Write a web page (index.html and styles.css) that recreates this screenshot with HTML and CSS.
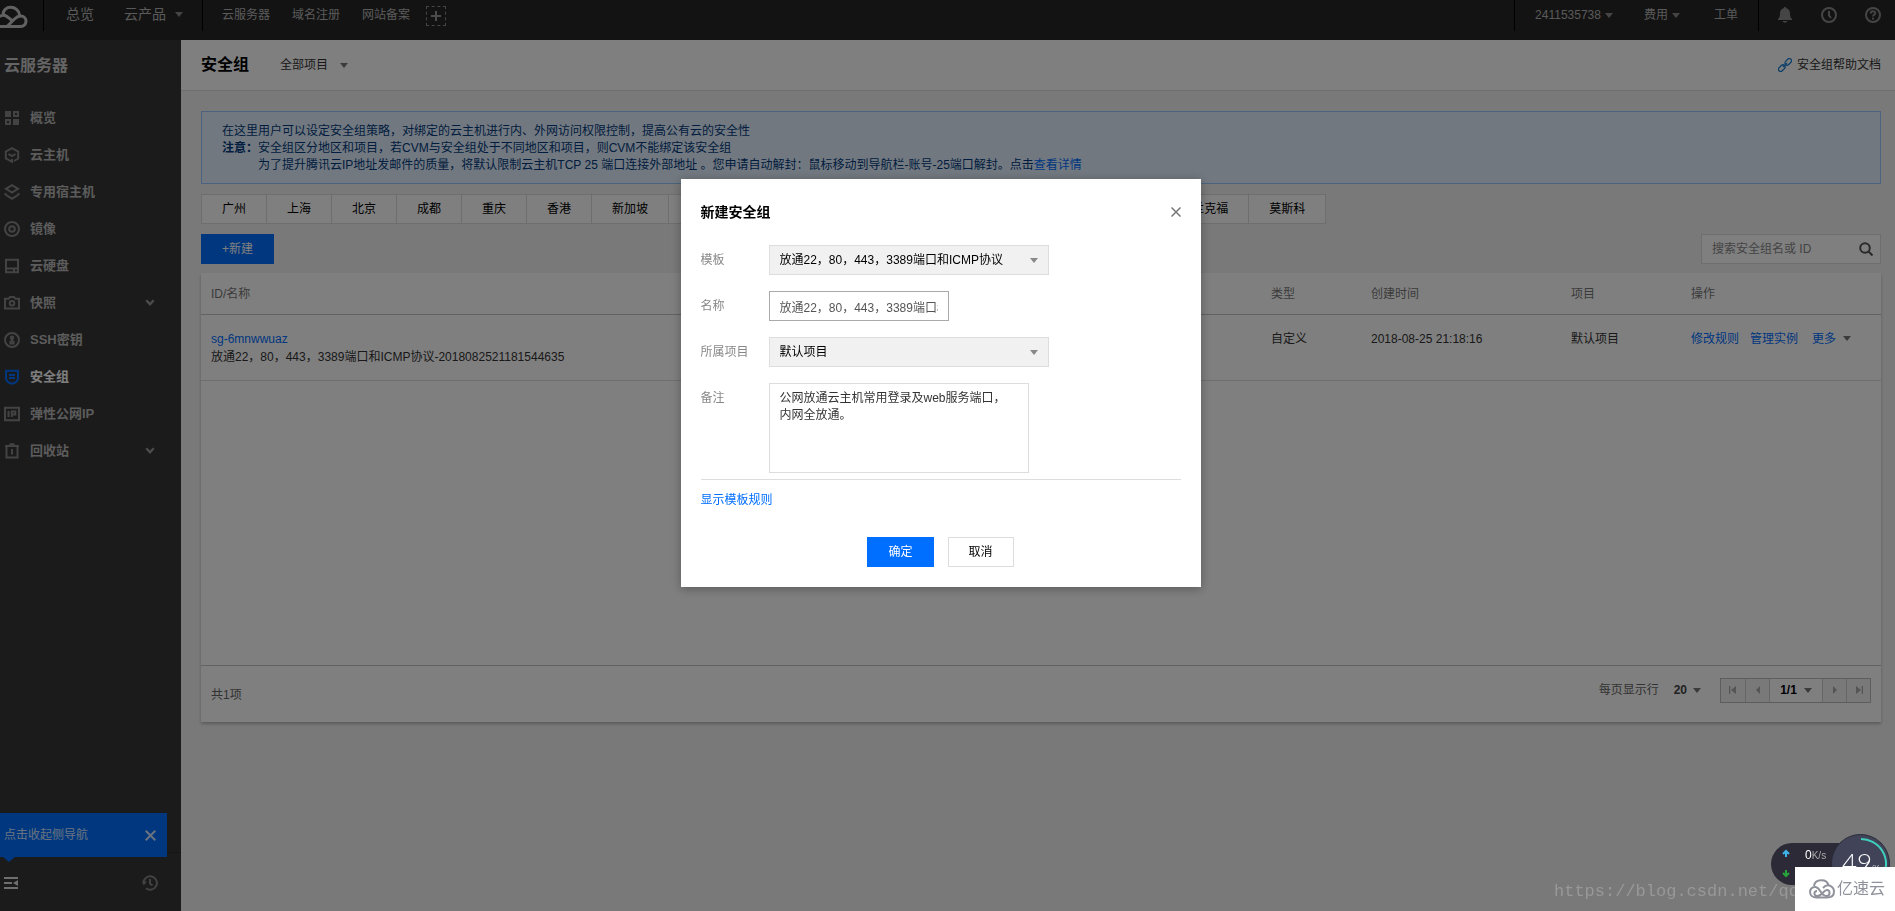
FILE: index.html
```html
<!DOCTYPE html>
<html lang="zh-CN">
<head>
<meta charset="utf-8">
<title>安全组</title>
<link rel="stylesheet" href="styles.css">
</head>
<body>
<div class="page">
  <header class="topbar">
    <a class="logo" href="#" aria-label="控制台首页">
      <svg width="28" height="26" viewBox="0 0 28 26" fill="none" stroke="currentColor" stroke-width="3"><path d="M-1 13.5c5-2.500 7.500-1 10.500 2l3 2.500M3 12C3 1.500 18.500 2 19.500 12M7 23.500h13.500c7 0 7.500-10 .5-10.500-3-.2-4.500 1-6.500 3L7 23.500H-1"/></svg>
    </a>
    <nav class="nav-main">
      <a href="#">总览</a>
      <a class="with-caret" href="#">云产品<i class="caret"></i></a>
    </nav>
    <nav class="nav-fav">
      <a href="#">云服务器</a>
      <a href="#">域名注册</a>
      <a href="#">网站备案</a>
      <button class="add-fav" type="button" aria-label="添加"></button>
    </nav>
    <nav class="nav-user">
      <a class="user-id" href="#">2411535738<i class="caret"></i></a>
      <a class="user-fee" href="#">费用<i class="caret"></i></a>
      <a href="#">工单</a>
    </nav>
    <div class="nav-icons">
      <button type="button" aria-label="消息"><svg width="16" height="16" viewBox="0 0 16 16" fill="currentColor"><path d="M8 0c.9 0 1.300.6 1.300 1.300C12 2 13 4 13 6.500c0 3 .8 4.500 2 5.500v1H1v-1c1.200-1 2-2.500 2-5.500C3 4 4 2 6.700 1.300 6.700.6 7.100 0 8 0zM5.500 14h5c-.6 1.300-1.500 1.700-2.500 1.700s-1.900-.4-2.500-1.700z"/></svg></button>
      <button type="button" aria-label="历史"><svg width="16" height="16" viewBox="0 0 16 16" fill="none" stroke="currentColor" stroke-width="2"><circle cx="8" cy="8" r="7"/><path d="M8 4v4.500l2 2.500"/></svg></button>
      <button type="button" aria-label="帮助"><svg width="16" height="16" viewBox="0 0 16 16" fill="none" stroke="currentColor" stroke-width="2"><circle cx="8" cy="8" r="7"/><path d="M5.800 6.500C5.800 3.600 10.300 3.700 10.200 6.300 10.100 7.800 8 7.800 8 9.600M8 10.800v1.800"/></svg></button>
    </div>
  </header>

  <div class="body">
    <aside class="sidebar">
      <h2 class="side-title">云服务器</h2>
      <nav class="side-nav">
        <a href="#"><svg class="ico" viewBox="0 0 16 16"><path d="M1 1h6v6H1zM9 9h6v6H9z" class="solid"/><path d="M10 2h4v4h-4zM2 10h4v4H2z"/></svg>概览</a>
        <a href="#"><svg class="ico" viewBox="0 0 16 16"><path d="M10 14l4.200-2.500v-7L8 1.200 1.800 4.500v7L8 14.800V12M4.500 7L8 9l3.500-2"/></svg>云主机</a>
        <a href="#"><svg class="ico" viewBox="0 0 16 16"><path d="M8 1.200l6 3.600-6 3.800-6-3.800zM1.500 9v1.500L8 14.800l6.500-4.300V9"/></svg>专用宿主机</a>
        <a href="#"><svg class="ico" viewBox="0 0 16 16"><circle cx="8" cy="8" r="7"/><circle cx="8" cy="8" r="2.800"/></svg>镜像</a>
        <a href="#"><svg class="ico" viewBox="0 0 16 16"><path d="M2 1.800h12v12.500H2zM2 10.500h12M9 12.500h2"/></svg>云硬盘</a>
        <a href="#"><svg class="ico" viewBox="0 0 16 16"><path d="M1 3.800h3.500L6 2h4l1.500 1.800H15v9.700H1z"/><circle cx="8" cy="8.200" r="2.300"/></svg>快照<svg class="chev" viewBox="0 0 8 6"><path d="M.8 1L4 4.500 7.200 1"/></svg></a>
        <a href="#"><svg class="ico" viewBox="0 0 16 16"><circle cx="8" cy="8" r="7"/><circle cx="8" cy="5.800" r="1.200"/><path d="M8 7v3M5.500 11.500h5M6.500 8.800v2.500M9.500 8.800v2.500"/></svg>SSH密钥</a>
        <a class="active" href="#"><svg class="ico" viewBox="0 0 16 16"><path d="M2 1.800h12V9c0 3-2.500 5-6 5.800C4.500 14 2 12 2 9zM5 6h6M5 9h6"/></svg>安全组</a>
        <a href="#"><svg class="ico" viewBox="0 0 16 16"><path d="M1 1.800h14v12.500H1zM4.500 5v6M7.800 11V5.500h3.500v3H7.800"/></svg>弹性公网IP</a>
        <a href="#"><svg class="ico" viewBox="0 0 16 16"><path d="M1 3h14M5.500 1.200h5M2.500 3v11.500h11V3M8 6v5.500"/></svg>回收站<svg class="chev" viewBox="0 0 8 6"><path d="M.8 1L4 4.500 7.200 1"/></svg></a>
      </nav>
      <div class="side-foot">
        <div class="tip">点击收起侧导航
          <button type="button" aria-label="关闭提示"><svg width="11" height="11" viewBox="0 0 11 11" stroke="currentColor" stroke-width="2"><path d="M.7.7l9.600 9.600M10.300.7L.7 10.300"/></svg></button>
        </div>
        <button class="collapse" type="button" aria-label="收起"><svg width="14" height="14" viewBox="0 0 14 14" fill="currentColor"><path d="M0 1h14v2H0zM0 6h8v2H0zM0 11h14v2H0zM14 4v6L9 7z"/></svg></button>
        <button class="recent" type="button" aria-label="最近访问"><svg width="16" height="16" viewBox="0 0 16 16" fill="none" stroke="currentColor" stroke-width="2"><path d="M1.500 8A6.700 6.700 0 1 1 4 13.200M8 4v4.500l2.500 2"/><path d="M0 6.500h5l-3.300 4z" fill="currentColor" stroke="none"/></svg></button>
      </div>
    </aside>

    <main class="main">
      <div class="main-head">
        <h1>安全组</h1>
        <button class="project" type="button">全部项目<i class="caret"></i></button>
        <a class="help" href="#"><svg width="14" height="14" viewBox="0 0 14 14" fill="none" stroke="currentColor" stroke-width="1.300"><rect x="6.500" y="1.700" width="7.500" height="4.400" rx="2.200" transform="rotate(-45 10.200 3.900)"/><rect x="0" y="7.900" width="7.500" height="4.400" rx="2.200" transform="rotate(-45 3.800 10.100)"/><path d="M5 9l4-4"/></svg>安全组帮助文档</a>
      </div>
      <div class="content">
        <div class="notice">
          <p>在这里用户可以设定安全组策略，对绑定的云主机进行内、外网访问权限控制，提高公有云的安全性</p>
          <div class="notice-note">
            <b>注意：</b>
            <div>
              <p>安全组区分地区和项目，若CVM与安全组处于不同地区和项目，则CVM不能绑定该安全组</p>
              <p>为了提升腾讯云IP地址发邮件的质量，将默认限制云主机TCP 25 端口连接外部地址 。您申请自动解封：鼠标移动到导航栏-账号-25端口解封。点击<a href="#">查看详情</a></p>
            </div>
          </div>
        </div>
        <div class="regions">
          <button type="button">广州</button><button type="button">上海</button><button type="button">北京</button><button type="button">成都</button><button type="button">重庆</button><button type="button">香港</button><button type="button">新加坡</button><button type="button">曼谷</button><button type="button">孟买</button><button type="button">首尔</button><button type="button">东京</button><button type="button">硅谷</button><button type="button">弗吉尼亚</button><button type="button">多伦多</button><button type="button">法兰克福</button><button type="button">莫斯科</button>
        </div>
        <div class="actions">
          <button class="btn primary" type="button">+新建</button>
          <label class="search">
            <input type="text" placeholder="搜索安全组名或 ID" aria-label="搜索安全组">
            <svg width="14" height="14" viewBox="0 0 14 14" fill="none" stroke="currentColor" stroke-width="2"><circle cx="6" cy="6" r="4.800"/><path d="M9.500 9.500l4 4"/></svg>
          </label>
        </div>
        <section class="panel">
          <div class="table-wrap">
            <table>
              <colgroup><col><col class="c-type"><col class="c-time"><col class="c-proj"><col class="c-op"></colgroup>
              <thead><tr><th>ID/名称</th><th>类型</th><th>创建时间</th><th>项目</th><th>操作</th></tr></thead>
              <tbody><tr>
                <td><a href="#">sg-6mnwwuaz</a><br>放通22，80，443，3389端口和ICMP协议-2018082521181544635</td>
                <td>自定义</td><td>2018-08-25 21:18:16</td><td>默认项目</td>
                <td><div class="ops"><a href="#">修改规则</a><a href="#">管理实例</a><a class="more" href="#">更多<i class="caret"></i></a></div></td>
              </tr></tbody>
            </table>
          </div>
          <footer class="panel-foot">
            <span class="total">共1项</span>
            <span class="per">每页显示行</span>
            <button class="size" type="button">20<i class="caret"></i></button>
            <div class="pager">
              <button type="button" aria-label="首页"><svg width="8" height="10" viewBox="0 0 8 10" fill="currentColor"><path d="M0 1h1.300v8H0zM7 1v8L2 5z"/></svg></button>
              <button type="button" aria-label="上一页"><svg width="8" height="10" viewBox="0 0 8 10" fill="currentColor"><path d="M6 1v8L2 5z"/></svg></button>
              <button class="cur" type="button">1/1<i class="caret"></i></button>
              <button type="button" aria-label="下一页"><svg width="8" height="10" viewBox="0 0 8 10" fill="currentColor"><path d="M2 1v8l4-4z"/></svg></button>
              <button type="button" aria-label="末页"><svg width="8" height="10" viewBox="0 0 8 10" fill="currentColor"><path d="M6.700 1H8v8H6.700zM1 1v8l5-4z"/></svg></button>
            </div>
          </footer>
        </section>
      </div>
    </main>
  </div>
</div>

<div class="scrim">
  <form class="dialog" role="dialog" aria-labelledby="dlg-title">
    <div class="dlg-head">
      <h3 id="dlg-title">新建安全组</h3>
      <button class="close" type="button" aria-label="关闭"><svg width="10" height="10" viewBox="0 0 10 10" stroke="currentColor" stroke-width="1.500"><path d="M.5.5l9 9M9.500.5l-9 9"/></svg></button>
    </div>
    <div class="fields">
      <label for="tpl">模板</label>
      <div class="pick"><select id="tpl"><option>放通22，80，443，3389端口和ICMP协议</option></select></div>
      <label for="name">名称</label>
      <input id="name" type="text" value="放通22，80，443，3389端口和ICMP协议">
      <label for="proj">所属项目</label>
      <div class="pick"><select id="proj"><option>默认项目</option></select></div>
      <label for="memo">备注</label>
      <textarea id="memo">公网放通云主机常用登录及web服务端口，内网全放通。</textarea>
    </div>
    <div class="rules"><a href="#">显示模板规则</a></div>
    <div class="dlg-foot">
      <button class="btn primary" type="submit">确定</button>
      <button class="btn" type="button">取消</button>
    </div>
  </form>
</div>

<div class="corner">
  <span class="watermark">https://blog.csdn.net/qq</span>
  <div class="speed">
    <svg class="arrows" width="8" height="30" viewBox="0 0 8 30" fill="none" stroke-width="2"><path d="M4 8V2M1 5l3-3 3 3" stroke="#3fb4ea"/><path d="M4 21v6M1 24l3 3 3-3" stroke="#27a53a"/></svg>
    <span class="rate"><b>0</b>K/s</span>
    <div class="gauge">
      <svg width="58" height="58" viewBox="0 0 58 58" fill="none"><path d="M29 4a25 25 0 0 1 22 37" stroke="#3fd0bd" stroke-width="2"/></svg>
      <span>49<small>%</small></span>
    </div>
  </div>
  <div class="brand">
    <svg width="26" height="20" viewBox="0 0 26 20" fill="none" stroke="currentColor" stroke-width="2"><path d="M5 7C6-.5 18-.5 19.500 6.500M8 18.500C-1 19-1 7.500 6.500 8c5 .5 5 9 11 9 4 0 4-6 .5-6-3.500 0-5 6-9.500 6-4 0-4-5-.5-5"/><path d="M14 9c5-6 11-1 11 3.500 0 4-3 6-7 6H8"/></svg>
    <span>亿速云</span>
  </div>
</div>
</body>
</html>
```
FILE: styles.css
```css
* { box-sizing: border-box; }
body, h1, h2, h3, p { margin: 0; }
body {
  font: 12px/17px "Liberation Sans", "Noto Sans CJK SC", sans-serif;
  color: #333;
  background: #f3f3f3;
  overflow: hidden;
}
button, input, select, textarea { font: inherit; color: inherit; margin: 0; }
button { background: none; border: 0; padding: 0; cursor: pointer; }
a { color: #006eff; text-decoration: none; }
svg { display: block; flex: none; }

.page { display: flex; flex-direction: column; min-height: 100vh; }
.caret {
  display: inline-block;
  border: 4px solid transparent;
  border-top: 5px solid currentColor;
  border-bottom: 0;
}

/* top bar */
.topbar {
  display: flex;
  align-items: flex-start;
  height: 40px;
  background: #272727;
  color: #b4b4b4;
}
.topbar a { color: inherit; }
.topbar > * { height: 31px; display: flex; align-items: center; padding-bottom: 2px; }
.topbar .caret { color: #888; }
.topbar .logo { padding: 0 15px 0 0; color: #c4c4c4; }
.nav-main, .nav-fav, .nav-user, .nav-icons { border-left: 1px solid #000; }
.nav-main { gap: 30px; padding: 0 19px 2px 22px; font-size: 14px; }
.nav-main .with-caret, .nav-user a { display: flex; align-items: center; }
.nav-main .with-caret { gap: 9px; }
.nav-fav { gap: 22px; padding: 0 19px; flex: 1; }
.nav-user { padding: 0 20px; }
.nav-user a { gap: 4px; }
.nav-user .user-id { margin-right: 31px; }
.nav-user .user-fee { margin-right: 34px; }
.nav-icons { padding-left: 4px; }
.nav-icons button { width: 44px; height: 28px; display: grid; place-items: center; color: #8a8a8a; }
.add-fav {
  width: 20px; height: 20px;
  margin-left: -6px;
  border: 1px dashed #8a8a8a;
  background:
    linear-gradient(#999, #999) center / 10px 2px no-repeat,
    linear-gradient(#999, #999) center / 2px 10px no-repeat;
}

.body { display: flex; flex: 1; }

/* side bar */
.sidebar {
  width: 181px;
  flex: none;
  display: flex;
  flex-direction: column;
  background: #363636;
  color: #b8b8b8;
}
.side-title { padding: 14px 4px 12px; font-size: 16px; line-height: 24px; color: #c8c8c8; }
.side-nav { padding-top: 9px; flex: 1; }
.side-nav a {
  display: flex;
  align-items: center;
  gap: 10px;
  height: 37px;
  padding: 0 26px 0 4px;
  font-size: 13px;
  font-weight: bold;
  color: inherit;
}
.ico { width: 16px; height: 16px; fill: none; stroke: #868686; stroke-width: 2; }
.ico .solid { fill: #868686; stroke: none; }
.chev { width: 10px; height: 7px; margin-left: auto; fill: none; stroke: #999; stroke-width: 2; }
.side-nav .active { color: #fff; }
.active .ico { stroke: #006eff; }
.side-foot {
  position: relative;
  display: flex;
  justify-content: space-between;
  align-items: center;
  height: 59px;
  padding: 2px 23px 0 4px;
  border-top: 1px solid #2c2c2c;
}
.collapse { color: #ddd; }
.recent { color: #858585; }
.tip {
  position: absolute;
  left: 0; right: 14px; bottom: 54px;
  height: 44px;
  display: flex;
  align-items: center;
  justify-content: space-between;
  padding: 0 11px 0 4px;
  background: #006eff;
  color: #d5e5ff;
}
.tip::after {
  content: "";
  position: absolute;
  left: 3px; top: 100%;
  border: 6px solid transparent;
  border-top: 5px solid #006eff;
  border-bottom: 0;
}

/* main */
.main { flex: 1; min-width: 0; }
.main-head {
  display: flex;
  align-items: center;
  height: 51px;
  padding: 0 14px 0 20px;
  background: #fff;
  border-bottom: 1px solid #ddd;
}
.main-head h1 { font-size: 16px; line-height: 24px; color: #000; }
.project { display: flex; align-items: center; gap: 12px; margin-left: 31px; }
.project .caret, .size .caret, .cur .caret, .more .caret { color: #777; }
.help { display: flex; align-items: center; gap: 5px; margin-left: auto; color: #333; }
.help svg { color: #1a7fd0; }
.content { padding: 20px 14px 20px 20px; }

.notice {
  padding: 11px 20px 9px;
  border: 1px solid #97c7ff;
  background: #e5f0ff;
  color: #003b80;
}
.notice-note { display: flex; }
.notice-note b { width: 36px; flex: none; }

.regions { display: flex; margin-top: 10px; }
.regions button {
  height: 30px;
  padding: 0 20px;
  border: 1px solid #ddd;
  border-right-width: 0;
  background: #fff;
  color: #000;
}
.regions button:last-child { border-right-width: 1px; }

.actions { display: flex; justify-content: space-between; margin: 10px 0 9px; }
.btn {
  min-width: 66px;
  height: 30px;
  padding: 0 20px;
  border: 1px solid #ddd;
  background: #fff;
  color: #000;
}
.btn.primary { border-color: #006eff; background: #006eff; color: #fff; }
.search {
  display: flex;
  align-items: center;
  width: 180px;
  height: 30px;
  padding: 0 7px 0 10px;
  border: 1px solid #ddd;
  background: #fff;
  color: #555;
}
.search input { flex: 1; min-width: 0; border: 0; padding: 0; background: none; outline: 0; }
.search input::placeholder { color: #888; opacity: 1; }

.panel { background: #fff; box-shadow: 0 2px 3px rgba(0, 0, 0, .25); }
.table-wrap { min-height: 392px; }
table { width: 100%; border-collapse: collapse; table-layout: fixed; }
.c-type { width: 100px; }
.c-time, .c-op { width: 200px; }
.c-proj { width: 120px; }
th, td { padding: 0 10px; text-align: left; vertical-align: top; border-bottom: 1px solid #ddd; }
th { height: 41px; padding-top: 2px; vertical-align: middle; font-weight: normal; color: #777; border-color: #c4c4c4; }
td { height: 66px; padding-top: 15px; line-height: 18px; }
.ops { display: flex; }
.ops a { margin-right: 11px; }
.ops .more { display: flex; align-items: center; gap: 7px; margin: 0 0 0 3px; }

.panel-foot {
  display: flex;
  align-items: center;
  height: 57px;
  padding: 0 10px 8px;
  border-top: 1px solid #c4c4c4;
  color: #666;
}
.total { margin-right: auto; padding-top: 10px; }
.size { display: flex; align-items: center; gap: 6px; margin: 0 19px 0 15px; font-weight: bold; color: #444; }
.pager { display: flex; border: 1px solid #bbb; }
.pager button {
  display: flex;
  align-items: center;
  justify-content: center;
  gap: 7px;
  width: 24px;
  height: 23px;
  background: #f2f2f2;
  color: #aaa;
}
.pager button + button { border-left: 1px solid #ccc; }
.pager .cur { width: 53px; background: #fff; font-weight: bold; color: #000; }

/* dialog */
.scrim {
  position: fixed;
  inset: 0;
  display: flex;
  justify-content: center;
  align-items: flex-start;
  padding: 179px 14px 0 0;
  background: rgba(0, 0, 0, .5);
}
.dialog {
  width: 520px;
  padding: 20px;
  background: #fff;
  box-shadow: 0 2px 10px rgba(0, 0, 0, .3);
}
.dlg-head { display: flex; align-items: center; justify-content: space-between; height: 26px; }
.dlg-head h3 { font-size: 14px; line-height: 20px; color: #000; }
.close { color: #777; }
.fields {
  display: grid;
  grid-template-columns: 68px 1fr;
  row-gap: 16px;
  padding: 20px 0 6px;
  border-bottom: 1px solid #ddd;
}
.fields label { line-height: 30px; color: #888; }
.pick { position: relative; width: 280px; }
.pick::after {
  content: "";
  position: absolute;
  right: 11px; top: 13px;
  border: 4px solid transparent;
  border-top: 5px solid #888;
  border-bottom: 0;
  pointer-events: none;
}
.fields select, .fields input, .fields textarea {
  display: block;
  padding: 0 10px;
  border: 1px solid #ddd;
  border-radius: 0;
  background: #fff;
  outline: 0;
}
.fields select { appearance: none; width: 100%; height: 30px; background: #f1f1f1; color: #000; }
.fields input { width: 180px; height: 30px; border-color: #aaa; color: #555; }
.fields textarea { width: 260px; height: 90px; padding: 6px 20px 4px 10px; resize: none; overflow: hidden; }
.rules { padding-top: 12px; }
.dlg-foot { display: flex; justify-content: center; gap: 14px; padding-top: 28px; }

/* corner overlays */
.corner { position: fixed; right: 0; bottom: 0; width: 341px; height: 77px; }
.watermark {
  position: absolute;
  left: 0; bottom: 8px;
  font: 17px/22px "Liberation Mono", monospace;
  color: #989898;
  white-space: nowrap;
}
.speed {
  position: absolute;
  right: 24px; top: 9px;
  width: 100px; height: 42px;
  display: flex;
  padding: 6px 0 0 11px;
  border-radius: 21px;
  background: #2b2a36;
  color: #aaa;
}
.rate { margin-left: 15px; line-height: 12px; font-size: 10px; }
.rate b { color: #fff; font-size: 12px; font-weight: normal; }
.gauge {
  position: absolute;
  left: 60px; top: -9px;
  width: 59px; height: 59px;
  border: 1px solid #292a38;
  border-radius: 50%;
  background: #414459;
  color: #fff;
}
.gauge span { position: absolute; left: 10px; top: 13px; font: 300 26px/28px Lato, sans-serif; white-space: nowrap; }
.gauge small { font-size: 10px; }
.brand {
  position: absolute;
  right: 0; bottom: 0;
  width: 100px; height: 44px;
  display: flex;
  align-items: center;
  gap: 2px;
  padding-left: 14px;
  background: #fff;
  color: #8f929b;
  font-size: 16px;
  line-height: 24px;
}
```
